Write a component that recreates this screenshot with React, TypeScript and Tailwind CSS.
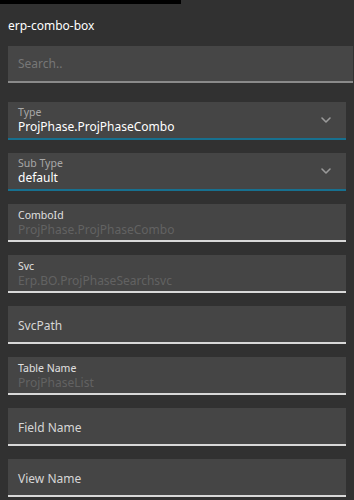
import React from "react";

type Field = {
  label: string;
  value?: string;
  placeholder?: string;
  combo?: boolean;
};

const FIELDS: Field[] = [
  { label: "Type", value: "ProjPhase.ProjPhaseCombo", combo: true },
  { label: "Sub Type", value: "default", combo: true },
  { label: "ComboId", placeholder: "ProjPhase.ProjPhaseCombo" },
  { label: "Svc", placeholder: "Erp.BO.ProjPhaseSearchsvc" },
  { label: "SvcPath" },
  { label: "Table Name", placeholder: "ProjPhaseList" },
  { label: "Field Name" },
  { label: "View Name" },
];

const Chevron = () => (
  <svg width="12" height="8" viewBox="0 0 12 8" fill="none" className="shrink-0">
    <path d="M2 2l4 4 4-4" stroke="#9a9a9a" strokeWidth="1.6" strokeLinecap="round" strokeLinejoin="round" />
  </svg>
);

const FieldBox = ({ f }: { f: Field }) => {
  const floated = f.value !== undefined || f.placeholder !== undefined;

  if (f.combo) {
    return (
      <div className="h-[38px] bg-[#454545] border-b-2 border-[#17708f] flex items-center pl-[10px] pr-[14px]">
        <div className="flex-1 flex flex-col pt-[1px]">
          <span className="text-[10.5px] leading-[13px] text-[#a8a8a8]">{f.label}</span>
          <span className="text-[12px] leading-[16px] text-white">{f.value}</span>
        </div>
        <Chevron />
      </div>
    );
  }

  return (
    <div className="h-[38px] bg-[#454545] border-b-2 border-[#d8d8d8] flex flex-col justify-center pl-[10px]">
      {floated ? (
        <div className="flex flex-col pt-[2px]">
          <span className="text-[10.5px] leading-[13px] text-[#e0e0e0]">{f.label}</span>
          <span className="text-[12px] leading-[16px] text-[#626262]">{f.placeholder}</span>
        </div>
      ) : (
        <span className="text-[12px] leading-[16px] text-[#d6d6d6] pt-[3px]">{f.label}</span>
      )}
    </div>
  );
};

export default function App() {
  return (
    <div
      className="w-[354px] h-[500px] bg-[#313131] overflow-hidden"
      style={{ fontFamily: '"Noto Sans", "Open Sans", sans-serif' }}
    >
      <div className="w-[181px] h-[4px] bg-black" />
      <div className="pl-[8px] pt-[14px] text-[12px] leading-[16px] text-white h-[42px]">erp-combo-box</div>
      <div className="ml-[8px] mr-[1px] h-[37px] bg-[#464646] border-b-2 border-[#8a8a8a] flex items-center pl-[10px]">
        <span className="text-[12px] text-[#777777]">Search..</span>
      </div>
      <div className="flex flex-col gap-[13px] ml-[8px] mr-[8px] mt-[19px]">
        {FIELDS.map((f) => (
          <FieldBox key={f.label} f={f} />
        ))}
      </div>
    </div>
  );
}
